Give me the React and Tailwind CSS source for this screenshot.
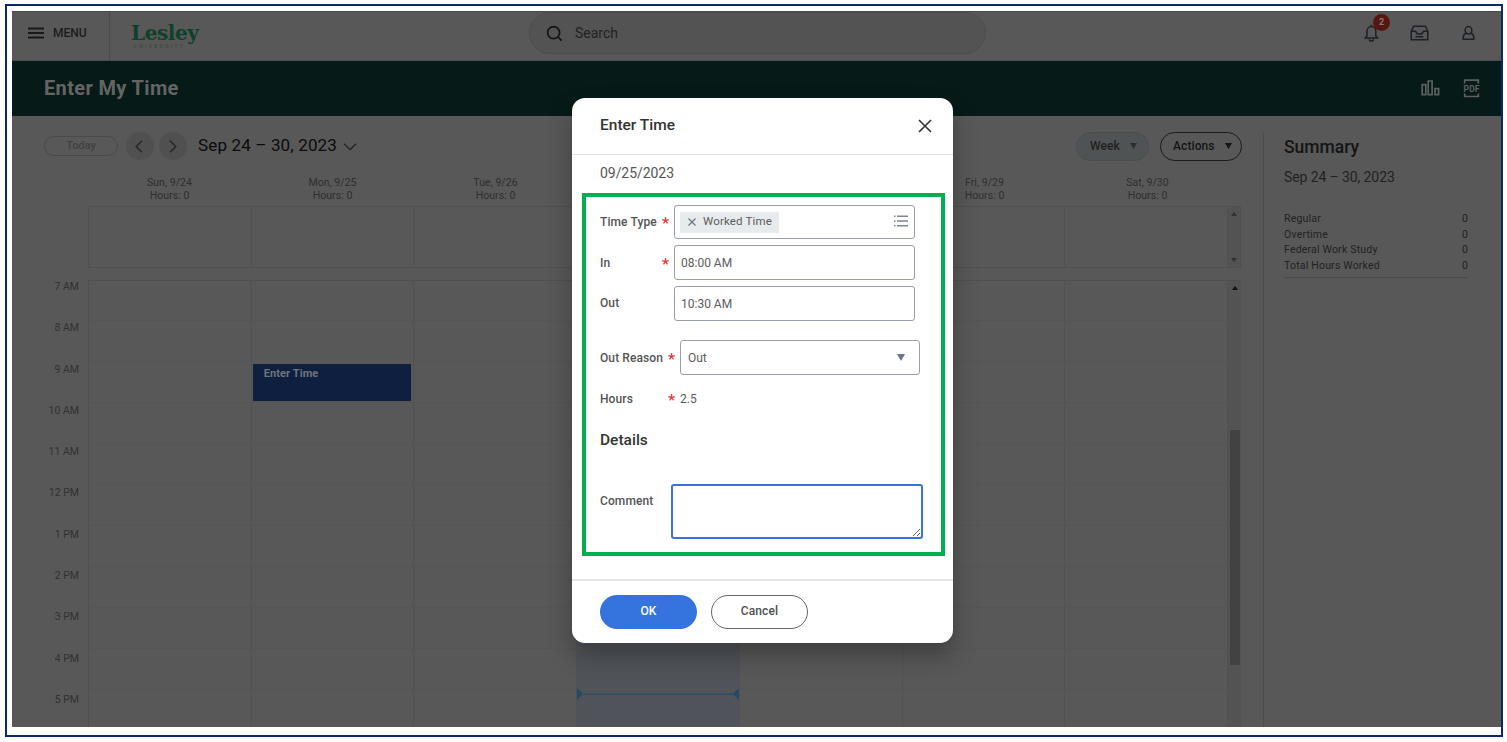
import React, { useState } from "react";
import clsx from "clsx";

// Wednesday and Thursday headings sit underneath the open dialog
const days = [
  { name: "Sun, 9/24" },
  { name: "Mon, 9/25", entry: "Enter Time" },
  { name: "Tue, 9/26" },
  { name: "Wed, 9/27", today: true, covered: true },
  { name: "Thu, 9/28", covered: true },
  { name: "Fri, 9/29" },
  { name: "Sat, 9/30" },
];

const hours = [
  "7 AM",
  "8 AM",
  "9 AM",
  "10 AM",
  "11 AM",
  "12 PM",
  "1 PM",
  "2 PM",
  "3 PM",
  "4 PM",
  "5 PM",
];

const totals = [
  { label: "Regular", value: 0 },
  { label: "Overtime", value: 0 },
  { label: "Federal Work Study", value: 0 },
  { label: "Total Hours Worked", value: 0 },
];

const Triangle = ({ className, up }) => (
  <svg className={className} viewBox="0 0 8 7" fill="currentColor" preserveAspectRatio="none">
    <path d={up ? "M0 7h8L4 0z" : "M0 0h8L4 7z"} />
  </svg>
);

const TopBar = () => (
  <header className="flex h-[50px] shrink-0 items-start border-t border-[#4b4b4b] border-b border-b-[#4a504f]">
    <button className="flex h-full w-[98px] items-center gap-[9px] border-r border-[#4c4c4c] pl-[16px] pb-[6px]">
      <svg className="h-[12px] w-[16px]" viewBox="0 0 16 12" stroke="#16181a" strokeWidth="1.8">
        <path d="M0 1.5h16M0 6h16M0 10.5h16" />
      </svg>
      <span className="text-[12px] font-medium text-[#1b1b1b]">MENU</span>
    </button>
    <div className="ml-[21px] mt-[11px] flex w-[90px] flex-col">
      <span className="font-['DejaVu_Serif',serif] text-[20px] font-bold leading-[20px] tracking-[-0.4px] text-[#0f4029]">
        Lesley
      </span>
      <span className="ml-[2px] text-[5.5px] leading-[6px] tracking-[2.2px] text-[#36492f]">UNIVERSITY</span>
    </div>
    <div className="ml-[308px] flex h-[42px] w-[457px] items-center rounded-full border border-[#4d4d4d] bg-[#535353] pl-[16px]">
      <svg className="h-[17px] w-[17px]" viewBox="0 0 17 17" fill="none" stroke="#141414" strokeWidth="1.7">
        <circle cx="7.6" cy="7.6" r="6" />
        <path d="M12 12l3.6 3.6" />
      </svg>
      <span className="ml-[12px] text-[14px] text-[#222]">Search</span>
    </div>
    <div className="ml-[378px] mt-[12px] flex items-center">
      <div className="relative">
        <svg className="h-[18px] w-[15px]" viewBox="0 0 15 18" fill="none" stroke="#1d2125" strokeWidth="1.5">
          <path d="M3 12V7.2a4.4 4.6 0 0 1 8.8 0V12l1.7 1.9H1.3zM5.4 15.2a2 1.8 0 0 0 4 0M7.4 2.8V.8" />
        </svg>
        <span className="absolute -top-[10px] left-[9px] flex h-[17px] w-[17px] items-center justify-center rounded-full bg-[#541711] text-[9px] font-bold text-[#8a7a78]">
          2
        </span>
      </div>
      <svg className="ml-[31px] h-[16px] w-[19px]" viewBox="0 0 19 16" fill="none" stroke="#1d2125" strokeWidth="1.5">
        <path d="M1.2 6.3L3.6 1.3h11.8l2.4 5v8.4H1.2zM1.2 6.3h4.3l1.8 2.6h4.4l1.8-2.6h4.3M5.6 11.8h7.8" />
      </svg>
      <svg className="ml-[33px] h-[16px] w-[13px]" viewBox="0 0 13 16" fill="none" stroke="#1d2125" strokeWidth="1.5">
        <ellipse cx="6.5" cy="5.3" rx="3.4" ry="3.7" />
        <path d="M4.2 8.3c-2 .7-3 2-3 4v1.9h10.6v-1.9c0-2-1-3.3-3-4" />
      </svg>
    </div>
  </header>
);

const TitleBar = () => (
  <div className="flex h-[55px] shrink-0 items-center justify-between bg-[#061a18] pb-[1px] pl-[32px] pr-[21px] text-[#5c6160]">
    <h1 className="text-[20px] font-bold tracking-[0.35px] text-[#646464]">Enter My Time</h1>
    <div className="flex items-center gap-[23px]">
      <svg className="h-[16px] w-[19px]" viewBox="0 0 19 16" fill="none" stroke="currentColor" strokeWidth="1.7">
        <path d="M1.2 4.7h3.6v10H1.2zM7.2 1h3.9v13.7H7.2zM14 8.7h3.6v6H14z" />
      </svg>
      <svg className="h-[19px] w-[17px]" viewBox="0 0 17 19">
        <path d="M1.7 4.4V1.2h13.6v3.2M1.7 14.5v3h13.6v-3" fill="none" stroke="currentColor" strokeWidth="1.7" />
        <text x="8.5" y="12.6" textAnchor="middle" textLength="16" fontSize="8.5" fontWeight="700" fill="currentColor">
          PDF
        </text>
      </svg>
    </div>
  </div>
);

const Toolbar = () => (
  <div className="flex h-[60px] items-center pl-[32px] pr-[21px]">
    <button className="h-[20px] w-[74px] rounded-full border border-[#4a4a4a] text-[11px] font-medium text-[#414141]">
      Today
    </button>
    <button className="ml-[8px] flex h-[28px] w-[28px] items-center justify-center rounded-full bg-[#505050]">
      <svg className="mr-[2px] mt-[1px] h-[13px] w-[8px]" viewBox="0 0 8 13" fill="none" stroke="#222629" strokeWidth="1.4">
        <path d="M7 .7L1.2 6.5 7 12.3" />
      </svg>
    </button>
    <button className="ml-[5px] flex h-[28px] w-[28px] items-center justify-center rounded-full bg-[#505050]">
      <svg className="mt-[1px] h-[13px] w-[8px]" viewBox="0 0 8 13" fill="none" stroke="#222629" strokeWidth="1.4">
        <path d="M1 .7l5.8 5.8L1 12.3" />
      </svg>
    </button>
    <span className="ml-[11px] text-[17px] tracking-[0.15px] text-[#0b0b0b]">Sep 24 – 30, 2023</span>
    <svg className="ml-[6px] mt-[2px] h-[8px] w-[14px]" viewBox="0 0 14 8" fill="none" stroke="#222629" strokeWidth="1.4">
      <path d="M1 .8l6 6 6-6" />
    </svg>
    <button className="ml-auto flex h-[29px] w-[73px] items-center gap-[10px] rounded-full border border-[#4a4e4e] bg-[#4f5353] pl-[13px] text-[12px] font-medium tracking-[0.1px] text-[#1f1f1f]">
      Week
      <Triangle className="h-[6px] w-[7px] text-[#2b2f31]" />
    </button>
    <button className="ml-[11px] flex h-[29px] w-[82px] items-center gap-[10px] rounded-full border border-[#1b1b1b] pl-[12px] text-[12px] font-medium tracking-[0.1px] text-[#151515]">
      Actions
      <Triangle className="h-[6px] w-[7px]" />
    </button>
  </div>
);

const Week = () => (
  <div className="flex min-h-0 flex-1 flex-col pr-[22px]">
    <div className="ml-[76px] grid w-[1141px] grid-cols-7 text-center text-[10.5px] leading-[13px] tracking-[0.05px] text-[#2f2f2f]">
      {days.map((day) => (
        <div key={day.name} className={clsx(day.covered && "invisible")}>
          <p>{day.name}</p>
          <p>Hours: 0</p>
        </div>
      ))}
    </div>
    <div className="ml-[76px] mt-[4px] flex h-[62px] shrink-0 border border-[#505050]">
      <div className="grid w-[1139px] grid-cols-7">
        {days.map((day) => (
          <div key={day.name} className="border-r border-[#525252]" />
        ))}
      </div>
      <div className="flex flex-1 flex-col items-center justify-between bg-[#535353] py-[5px]">
        <Triangle up className="h-[4px] w-[6px] text-[#333]" />
        <Triangle className="h-[4px] w-[6px] text-[#333]" />
      </div>
    </div>
    <div className="mt-[12px] flex min-h-0 flex-1 overflow-hidden">
      <div className="w-[76px] shrink-0 pr-[9px] text-right text-[10.5px] text-[#323232]">
        {hours.map((hour) => (
          <p key={hour} className="h-[41.3px] leading-[13px]">
            {hour}
          </p>
        ))}
      </div>
      <div className="flex h-[460px] flex-1 border-l border-t border-[#505050]">
        <div className="grid w-[1139px] grid-cols-7">
          {days.map((day) => (
            <div
              key={day.name}
              className={clsx(
                "relative overflow-hidden border-r border-[#525252]",
                day.today && "bg-[#50545a]"
              )}
            >
              <div className="h-[39.5px] border-b border-[#555]" />
              {hours.map((hour) => (
                <div key={hour} className="h-[41.1px] border-b border-[#555]" />
              ))}
              {day.entry && (
                <div className="absolute left-[1px] top-[83px] h-[37px] w-[158px] bg-[#0e1f40] pl-[11px] text-[11px] font-bold leading-[19px] tracking-[0.1px] text-[#70757d]">
                  {day.entry}
                </div>
              )}
              {day.today && (
                <svg className="absolute left-0 top-[407px] h-[12px] w-[162px]" viewBox="0 0 162 12" fill="#254a66">
                  <path d="M0 0v12L6.5 6zM162 0v12l-6.500-6zM5 5.500h152v1.200H5z" />
                </svg>
              )}
            </div>
          ))}
        </div>
        <div className="flex flex-1 flex-col items-center bg-[#535353] pt-[5px]">
          <Triangle up className="h-[4px] w-[6px] text-[#111]" />
          <div className="mt-[140px] h-[235px] w-[10px] bg-[#424242]" />
        </div>
      </div>
    </div>
  </div>
);

const Summary = () => (
  <aside className="mt-[17px] flex-1 border-l border-[#4c4c4c] pl-[20px] pr-[33px]">
    <h2 className="mt-[3px] text-[17.5px] font-medium leading-[22px] text-[#151515]">Summary</h2>
    <p className="mt-[8px] text-[14px] leading-[22px] tracking-[-0.1px] text-[#222]">Sep 24 – 30, 2023</p>
    <div className="mt-[23px] border-b border-[#4a4a4a] pb-[4px] text-[10.5px] leading-[15.5px] tracking-[0.2px] text-[#222]">
      {totals.map((row) => (
        <div key={row.label} className="flex justify-between">
          <span>{row.label}</span>
          <span>{row.value}</span>
        </div>
      ))}
    </div>
  </aside>
);

const Label = ({ children, required, className }) => (
  <div className={clsx("flex shrink-0 items-center justify-between pr-[5px]", className)}>
    <span className="whitespace-nowrap text-[12px] font-medium tracking-[0.1px] text-[#555]">{children}</span>
    {required && (
      <svg className="mb-[3px] h-[7px] w-[7px]" viewBox="0 0 8 8" stroke="#e8403a" strokeWidth="1.5">
        <path d="M4 0v4M4 4L.3 2.9M4 4l3.7-1.1M4 4L1.7 7.4M4 4l2.3 3.4" />
      </svg>
    )}
  </div>
);

const EnterTimeDialog = () => {
  const [comment, setComment] = useState("");

  return (
    <div className="absolute left-[560px] top-[87px] flex h-[545px] w-[381px] flex-col rounded-[13px] bg-white shadow-[0_12px_24px_rgba(0,0,0,0.3)]">
      <div className="flex h-[57px] shrink-0 items-center justify-between border-b border-[#dfe2e8] pl-[28px] pr-[21px]">
        <h3 className="text-[15.5px] font-medium text-[#333]">Enter Time</h3>
        <button>
          <svg className="h-[14px] w-[14px]" viewBox="0 0 14 14" stroke="#333" strokeWidth="1.6">
            <path d="M1 1l12 12M13 1L1 13" />
          </svg>
        </button>
      </div>
      <div className="flex flex-1 flex-col pl-[28px] text-[12px] text-[#5c5c5c]">
        <p className="mt-[8px] text-[14px] leading-[20px] tracking-[-0.05px] text-[#555]">09/25/2023</p>
        <div className="mt-[22px] flex h-[34px]">
          <Label required className="w-[74px]">Time Type</Label>
          <div className="flex w-[241px] items-center justify-between rounded-[3px] border border-[#9aa0a8] pl-[5px] pr-[6px]">
            <span className="flex h-[21px] w-[99px] items-center gap-[7px] rounded-[1px] bg-[#e8ebed] pl-[8px] text-[11.5px] tracking-[0.15px]">
              <svg className="h-[8px] w-[8px]" viewBox="0 0 8 8" stroke="#6b7580" strokeWidth="1.2">
                <path d="M.5.5l7 7M7.5.5l-7 7" />
              </svg>
              Worked Time
            </span>
            <svg className="mb-[2px] h-[12px] w-[14px]" viewBox="0 0 14 12" fill="#7b8794">
              <path d="M0 .5h1.5V2H0zM0 5.2h1.5v1.5H0zM0 10h1.5v1.5H0zM3 .5h11V2H3zM3 5.2h11v1.5H3zM3 10h11v1.5H3z" />
            </svg>
          </div>
        </div>
        <div className="mt-[6px] flex h-[35px]">
          <Label required className="w-[74px]">In</Label>
          <div className="flex w-[241px] items-center rounded-[3px] border border-[#9aa0a8] pl-[6px]">08:00 AM</div>
        </div>
        <div className="mt-[6px] flex h-[35px]">
          <Label className="w-[74px] pb-[1px]">Out</Label>
          <div className="flex w-[241px] items-center rounded-[3px] border border-[#9aa0a8] pl-[6px]">10:30 AM</div>
        </div>
        <div className="mt-[19px] flex h-[35px]">
          <Label required className="w-[80px]">Out Reason</Label>
          <div className="flex w-[240px] items-center justify-between rounded-[3px] border border-[#9aa0a8] pl-[7px] pr-[14px]">
            Out
            <Triangle className="h-[7px] w-[8px] text-[#6b7785]" />
          </div>
        </div>
        <div className="mt-[15px] flex h-[18px] items-center">
          <Label required className="w-[80px]">Hours</Label>
          <span>2.5</span>
        </div>
        <h4 className="mt-[21px] text-[15.5px] font-medium leading-[22px] text-[#333]">Details</h4>
        <div className="mt-[33px] flex h-[55px]">
          <Label className="h-[34px] w-[71px]">Comment</Label>
          <textarea
            className="h-[55px] w-[252px] resize rounded-[3px] border-2 border-[#3673df] p-1 outline-none"
            value={comment}
            onChange={(e) => setComment(e.target.value)}
          />
        </div>
      </div>
      <div className="flex h-[64px] shrink-0 border-t-2 border-[#e5e5e5] pl-[28px] pt-[14px] text-[12px] font-medium tracking-[0.1px]">
        <button className="h-[34px] w-[97px] rounded-full bg-[#3573de] pb-[2px] text-white">OK</button>
        <button className="ml-[14px] h-[34px] w-[97px] rounded-full border border-[#666] pb-[2px] text-[#505050]">Cancel</button>
      </div>
      {/* green callout around the fields to fill in */}
      <div className="pointer-events-none absolute left-[10px] top-[95px] h-[363px] w-[363px] border-4 border-[#00b050]" />
    </div>
  );
};

const App = () => {
  return (
    <div className="h-[742px] w-[1507px] overflow-hidden bg-white pl-[5px] pt-[4px] font-['Roboto',sans-serif]">
      <div className="h-[733px] w-[1498px] border-2 border-[#0a2a6c] pl-[5px] pt-[5px]">
        <div className="relative flex h-[716px] w-[1489px] flex-col bg-[#585858]">
          <TopBar />
          <TitleBar />
          <div className="flex min-h-0 flex-1">
            <main className="flex w-[1251px] shrink-0 flex-col">
              <Toolbar />
              <Week />
            </main>
            <Summary />
          </div>
          <EnterTimeDialog />
        </div>
      </div>
    </div>
  );
};

export default App;
